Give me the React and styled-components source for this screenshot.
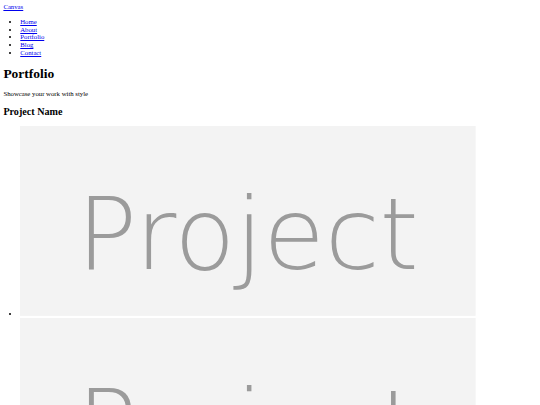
import React from 'react'
import styled, { createGlobalStyle } from 'styled-components'

// the reference is a 1280px wide page photographed down to 540px
const GlobalStyle = createGlobalStyle`
	html {
		zoom: 0.421875;
	}
	body {
		margin: 8px;
		font-family: "Liberation Serif", "Times New Roman", serif;
		font-size: 16px;
		line-height: 1.15;
		color: #000;
		background: #fff;
	}
	a {
		color: #0000ee;
	}
`

const StyledHeader = styled.header`
	display: block;
`

const StyledNavList = styled.ul`
	margin: 16px 0;
	padding-left: 40px;
`

const StyledTitle = styled.h1`
	font-size: 32px;
	margin: 21.44px 0;
`

const StyledSubtitle = styled.h2`
	font-size: 24px;
	margin: 19.92px 0;
`

const StyledProjectList = styled.ul`
	margin: 16px 0;
	padding-left: 40px;
`

const StyledThumb = styled.svg`
	display: inline;
	vertical-align: baseline;
	text {
		font-family: "DejaVu Sans", sans-serif;
		font-weight: 200;
	}
`

const links = ['Home', 'About', 'Portfolio', 'Blog', 'Contact']
const projects = [1, 2, 3]

const Thumb = () => (
	<StyledThumb width='1080' height='450' viewBox='0 0 1080 450' aria-label='Project'>
		<rect width='1080' height='450' fill='#f3f3f3' />
		<text x='540' y='339' textAnchor='middle' fontSize='237' fill='#9b9b9b'>Project</text>
	</StyledThumb>
)

const App = () => {
	return (
		<>
			<GlobalStyle />
			<StyledHeader>
				<a href='#'>Canvas</a>
				<nav>
					<StyledNavList>
						{links.map((link) => (
							<li key={link}><a href='#'>{link}</a></li>
						))}
					</StyledNavList>
				</nav>
			</StyledHeader>
			<main>
				<StyledTitle>Portfolio</StyledTitle>
				<p>Showcase your work with style</p>
				<section>
					<StyledSubtitle>Project Name</StyledSubtitle>
					<StyledProjectList>
						{projects.map((id) => (
							<li key={id}><Thumb /></li>
						))}
					</StyledProjectList>
				</section>
			</main>
		</>
	)
}

export default App
